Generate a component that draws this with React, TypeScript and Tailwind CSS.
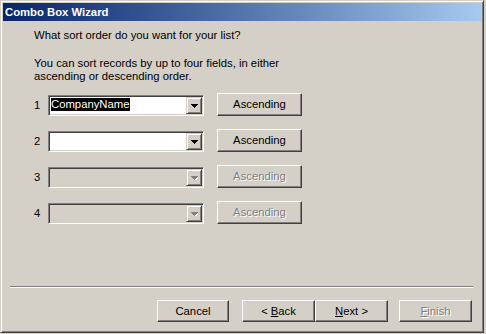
import React from "react";

function Arrow({ disabled }: { disabled?: boolean }) {
  return (
    <svg width="7" height="4" viewBox="0 0 7 4" className="block">
      {disabled && <path d="M2 2h5v1H6v1H3V3H2z" fill="#ffffff" />}
      <path d="M0 0h7v1H6v1H5v1H4v1H3V3H2V2H1V1H0z" fill={disabled ? "#808080" : "#000000"} />
    </svg>
  );
}

function Combo({ value, disabled }: { value?: string; disabled?: boolean }) {
  return (
    <div
      className={`flex h-[21px] w-[156px] border border-t-[#808080] border-l-[#808080] border-r-white border-b-white shadow-[inset_1px_1px_0_#404040,inset_-1px_-1px_0_#d4d0c8] p-[1px] ${
        disabled ? "bg-[#d4d0c8]" : "bg-white"
      }`}
    >
      <div className="flex-1 pt-[1px] pl-[1px]">
        {value && <span className="bg-black text-white leading-[13px] inline-block pr-[1px]">{value}</span>}
      </div>
      <div className="w-[16px] h-full flex items-center justify-center bg-[#d4d0c8] border border-t-[#d4d0c8] border-l-[#d4d0c8] border-r-[#404040] border-b-[#404040] shadow-[inset_1px_1px_0_#ffffff,inset_-1px_-1px_0_#808080]">
        <Arrow disabled={disabled} />
      </div>
    </div>
  );
}

function Button({
  children,
  disabled,
  className = "",
}: {
  children: React.ReactNode;
  disabled?: boolean;
  className?: string;
}) {
  return (
    <div
      className={`flex items-center justify-center bg-[#d4d0c8] border border-t-white border-l-white border-r-[#404040] border-b-[#404040] shadow-[inset_-1px_-1px_0_#808080] ${
        disabled ? "text-[#808080] [text-shadow:1px_1px_0_#ffffff]" : "text-black"
      } ${className}`}
    >
      {children}
    </div>
  );
}

const rows = [
  { n: "1", value: "CompanyName", disabled: false },
  { n: "2", value: "", disabled: false },
  { n: "3", value: "", disabled: true },
  { n: "4", value: "", disabled: true },
];

export default function App() {
  return (
    <div className="w-[486px] h-[334px] bg-[#d4d0c8] font-['Liberation_Sans',Arial,sans-serif] text-[11.3px] text-black">
      <div className="w-[484px] h-[333px] flex flex-col p-[1px] border border-t-[#d4d0c8] border-l-[#d4d0c8] border-r-[#404040] border-b-[#404040] shadow-[inset_1px_1px_0_#ffffff,inset_-1px_-1px_0_#808080]">
        {/* Title bar */}
        <div className="h-[18px] ml-[1px] mt-[1px] bg-gradient-to-r from-[#0a246a] to-[#a6caf0] text-white font-bold leading-[18px] pl-[2px]">
          Combo Box Wizard
        </div>

        {/* Body */}
        <div className="flex-1 flex flex-col">
          <div className="pl-[32px] pt-[8px] leading-[13px]">
            <p>What sort order do you want for your list?</p>
            <p className="mt-[15px]">
              You can sort records by up to four fields, in either
              <br />
              ascending or descending order.
            </p>

            <div className="mt-[10px] flex flex-col gap-[13px]">
              {rows.map((r) => (
                <div key={r.n} className="flex items-end h-[23px]">
                  <div className="w-[14px] h-[21px] flex items-center">{r.n}</div>
                  <Combo value={r.value} disabled={r.disabled} />
                  <Button disabled={r.disabled} className="ml-[13px] w-[85px] h-[23px]">
                    Ascending
                  </Button>
                </div>
              ))}
            </div>
          </div>

          {/* Separator */}
          <div className="mt-auto ml-[8px] mr-[9px] border-t border-t-[#808080] border-b border-b-white" />

          {/* Buttons */}
          <div className="flex justify-end pr-[10px] pt-[12px] pb-[9px]">
            <Button className="w-[72px] h-[22px]">Cancel</Button>
            <Button className="ml-[13px] w-[73px] h-[22px]">
              &lt; <span className="underline ml-[3px]">B</span>ack
            </Button>
            <Button className="w-[73px] h-[22px]">
              <span className="underline">N</span>ext &gt;
            </Button>
            <Button disabled className="ml-[11px] w-[73px] h-[22px]">
              <span className="underline">F</span>inish
            </Button>
          </div>
        </div>
      </div>
    </div>
  );
}
